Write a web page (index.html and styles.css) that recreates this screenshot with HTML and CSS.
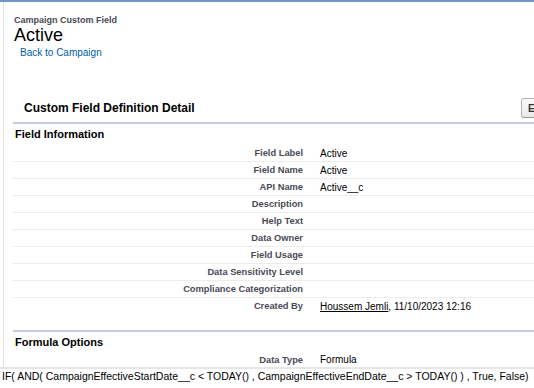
FILE: index.html
```html
<!DOCTYPE html>
<html lang="en">

<head>
    <meta charset="UTF-8">
    <meta name="viewport" content="width=device-width, initial-scale=1.0">
    <title>Campaign Custom Field: Active</title>
    <link rel="stylesheet" href="styles.css">
</head>

<body>
    <div class="topbar"></div>

    <div class="page">
        <div class="page-title">
            <div class="page-type">Campaign Custom Field</div>
            <h1>Active</h1>
            <a class="back-link" href="#">Back to Campaign</a>
        </div>

        <div class="page-block">
            <div class="pb-header">
                <h2>Custom Field Definition Detail</h2>
                <button class="btn">Edit</button>
            </div>

            <div class="section-head">Field Information</div>
            <div class="detail-list">
                <div class="row"><span class="label">Field Label</span><span class="value">Active</span></div>
                <div class="row"><span class="label">Field Name</span><span class="value">Active</span></div>
                <div class="row"><span class="label">API Name</span><span class="value">Active__c</span></div>
                <div class="row"><span class="label">Description</span><span class="value"></span></div>
                <div class="row"><span class="label">Help Text</span><span class="value"></span></div>
                <div class="row"><span class="label">Data Owner</span><span class="value"></span></div>
                <div class="row"><span class="label">Field Usage</span><span class="value"></span></div>
                <div class="row"><span class="label">Data Sensitivity Level</span><span class="value"></span></div>
                <div class="row"><span class="label">Compliance Categorization</span><span class="value"></span></div>
                <div class="row last"><span class="label">Created By</span><span class="value"><a class="user-link" href="#">Houssem Jemli</a>, 11/10/2023 12:16</span></div>
            </div>

            <div class="section-head sub">Formula Options</div>
            <div class="detail-list">
                <div class="row last short"><span class="label">Data Type</span><span class="value">Formula</span></div>
            </div>
        </div>
    </div>

    <div class="formula">IF( AND( CampaignEffectiveStartDate__c &lt; TODAY() , CampaignEffectiveEndDate__c &gt; TODAY() ) , True, False)</div>
</body>

</html>
```

FILE: styles.css
```css
/* Global */
body {
    margin: 0;
    padding: 0;
    font-family: "Liberation Sans", Arial, sans-serif;
    color: #000;
    background-color: #fff;
    overflow: hidden;
}

a {
    color: #015ba7;
    text-decoration: none;
}

/* Top strip */
.topbar {
    height: 2px;
    background-color: #7396c9;
}

/* Page frame */
.page {
    margin-left: 3px;
    border-left: 1px solid #e2e2e2;
    padding-left: 9px;
    overflow: hidden;
}

/* Title area */
.page-title {
    padding-left: 1px;
}

.page-type {
    margin-top: 13px;
    font-size: 9px;
    line-height: 10px;
    font-weight: bold;
    color: #4a4a56;
}

h1 {
    margin: 0;
    font-size: 18px;
    line-height: 20px;
    font-weight: normal;
    color: #000;
}

.back-link {
    display: block;
    margin-top: 2px;
    padding-left: 6px;
    font-size: 10px;
    line-height: 12px;
}

/* Detail block */
.page-block {
    margin-top: 39px;
}

.pb-header {
    display: flex;
    align-items: center;
    height: 20px;
    padding-bottom: 4px;
    border-bottom: 2px solid #c3cce0;
}

.pb-header h2 {
    margin: 0;
    padding-left: 11px;
    font-size: 12px;
    font-weight: bold;
    color: #000;
}

.btn {
    margin-left: auto;
    margin-right: -20px;
    height: 20px;
    padding: 0 6px;
    font-family: inherit;
    font-size: 10px;
    font-weight: bold;
    color: #333;
    background: linear-gradient(#fafafa, #e9e9e9);
    border: 1px solid #b5b5b5;
    border-bottom-color: #9a9a9a;
    border-radius: 3px;
}

.section-head {
    height: 21px;
    line-height: 21px;
    padding-left: 2px;
    font-size: 11px;
    font-weight: bold;
    color: #000;
}

.section-head.sub {
    margin-top: 16px;
    height: 20px;
    line-height: 20px;
    border-top: 2px solid #c3cce0;
}

.detail-list .row {
    display: grid;
    grid-template-columns: 290px 1fr;
    align-items: center;
    height: 16px;
    border-bottom: 1px solid #ececec;
}

.detail-list .row.last {
    border-bottom: none;
}

.detail-list .row.short {
    height: 15px;
}

.label {
    text-align: right;
    font-size: 9.3px;
    font-weight: bold;
    color: #4a4a56;
}

.value {
    padding-left: 17px;
    font-size: 10px;
    color: #000;
}

.user-link {
    color: #000;
    text-decoration: underline;
}

/* Formula text line */
.formula {
    border-top: 2px solid #e6e6e6;
    padding-left: 2px;
    font-size: 10.5px;
    line-height: 14px;
    white-space: nowrap;
    color: #000;
}
```
